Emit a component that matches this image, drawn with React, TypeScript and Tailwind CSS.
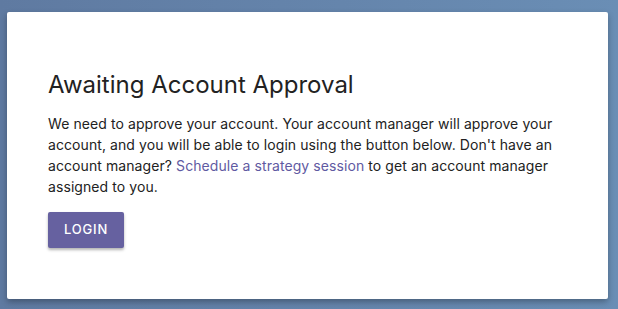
export default function App() {
  return (
    <div className="min-h-[309px] w-full bg-gradient-to-r from-[#5f7aa1] to-[#6a8eb5] px-[7px] pt-[12px] pb-[10px]" style={{ fontFamily: 'Inter, "Open Sans", sans-serif' }}>
      {/* Card */}
      <div className="bg-white h-[287px] w-[601px] rounded-[2px] shadow-[0_3px_6px_rgba(0,0,0,0.3)] px-[41px] pt-[59px]">
        <h1 className="text-[24px] leading-[28px] text-[#222]">Awaiting Account Approval</h1>
        <p className="mt-[14px] text-[14px] leading-[21px] tracking-[0.08px] text-[#222] pr-[8px]">
          We need to approve your account. Your account manager will approve your account, and you will be able to login using the button below. Don't have an account manager?{' '}
          <a href="#" className="text-[#5f5aa2]">Schedule a strategy session</a> to get an account manager assigned to you.
        </p>
        <button className="mt-[15px] h-[36px] w-[76px] rounded-[2px] bg-[#6661a0] text-white text-[13px] font-medium tracking-[0.8px] shadow-[0_2px_3px_rgba(0,0,0,0.3)]">
          LOGIN
        </button>
      </div>
    </div>
  );
}
